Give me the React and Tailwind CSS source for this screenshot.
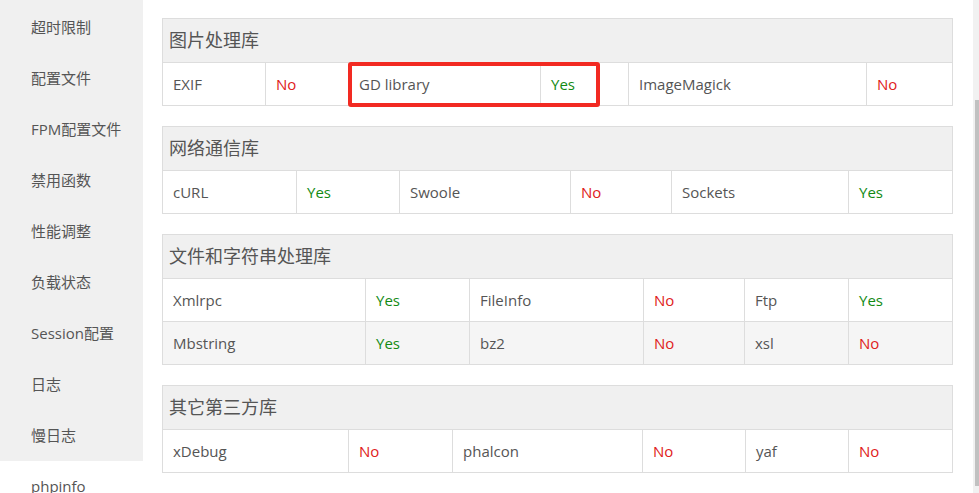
const menu = ['超时限制', '配置文件', 'FPM配置文件', '禁用函数', '性能调整', '负载状态', 'Session配置', '日志', '慢日志'];

const groups = [
  {
    title: '图片处理库',
    widths: [103, 83, 192, 88, 238, 86],
    rows: [[['EXIF', false], ['GD library', true], ['ImageMagick', false]]],
  },
  {
    title: '网络通信库',
    widths: [134, 103, 171, 101, 177, 104],
    rows: [[['cURL', true], ['Swoole', false], ['Sockets', true]]],
  },
  {
    title: '文件和字符串处理库',
    widths: [203, 104, 174, 101, 104, 104],
    rows: [
      [['Xmlrpc', true], ['FileInfo', false], ['Ftp', true]],
      [['Mbstring', true], ['bz2', false], ['xsl', false]],
    ],
  },
  {
    title: '其它第三方库',
    widths: [186, 104, 190, 103, 103, 104],
    rows: [[['xDebug', false], ['phalcon', false], ['yaf', false]]],
  },
];

function LibTable({ group }) {
  return (
    <table className="w-[790px] table-fixed border-collapse">
      <colgroup>
        {group.widths.map((w, i) => (
          <col key={i} style={{ width: w }} />
        ))}
      </colgroup>
      <thead>
        <tr className="h-[44px] bg-[#f0f0f0]">
          <th colSpan={6} className="border border-[#dddddd] pl-[6px] text-left text-[18px] font-normal text-[#555]">
            {group.title}
          </th>
        </tr>
      </thead>
      <tbody>
        {group.rows.map((row, ri) => (
          <tr key={ri} className={`h-[43px] ${ri === 1 ? 'bg-[#f5f5f5]' : 'bg-white'}`}>
            {row.map(([name, ok]) => [
              <td key={name} className="border border-[#dddddd] pl-[10px] text-[15px] text-[#555]">{name}</td>,
              <td key={name + '-v'} className={`border border-[#dddddd] pl-[10px] text-[15px] ${ok ? 'text-[#138a13]' : 'text-[#e02020]'}`}>
                {ok ? 'Yes' : 'No'}
              </td>,
            ])}
          </tr>
        ))}
      </tbody>
    </table>
  );
}

export default function App() {
  return (
    <div className="flex h-[493px] w-[979px] overflow-hidden bg-white text-[#555]" style={{ fontFamily: '"Open Sans", "Noto Sans CJK SC", sans-serif' }}>
      <aside className="flex w-[143px] shrink-0 flex-col">
        <ul className="shrink-0 bg-[#f0f0f0] pt-[2px]">
          {menu.map((m) => (
            <li key={m} className="flex h-[51px] items-center pl-[31px] text-[15px]">{m}</li>
          ))}
        </ul>
        <div className="flex h-[51px] shrink-0 items-center bg-white pl-[31px] text-[15px]">phpinfo</div>
      </aside>

      <main className="relative flex flex-1 flex-col gap-[20px] pl-[19px] pr-[20px] pt-[18px]">
        {groups.map((g) => (
          <LibTable key={g.title} group={g} />
        ))}
        <div className="absolute left-[205px] top-[62px] h-[45px] w-[252px] rounded-[3px] border-[4px] border-[#f22a22]" />
      </main>

      <div className="flex w-[7px] shrink-0 bg-[#f1f1f1] pl-[2px]">
        <div className="mt-[100px] h-[386px] w-full bg-[#c1c1c1]" />
      </div>
    </div>
  );
}
